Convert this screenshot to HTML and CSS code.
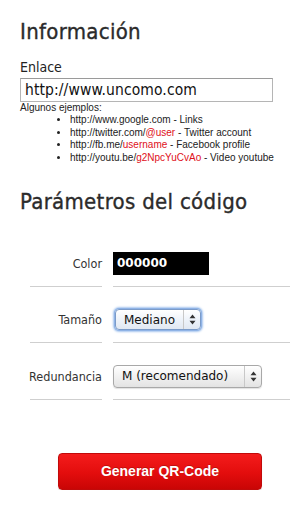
FILE: index.html
```html
<!DOCTYPE html>
<html lang="es">
<head>
<meta charset="utf-8">
<title>Generador QR</title>
<link rel="stylesheet" href="styles.css">
</head>
<body>
<div class="page">
  <h2 class="title title-info">Información</h2>
  <label class="field-label" for="url">Enlace</label>
  <div class="text-input" id="url">http://www.uncomo.com</div>
  <p class="examples-title">Algunos ejemplos:</p>
  <ul class="examples">
    <li>http://www.google.com - Links</li>
    <li>http://twitter.com/<span class="hl">@user</span> - Twitter account</li>
    <li>http://fb.me/<span class="hl">username</span> - Facebook profile</li>
    <li>http://youtu.be/<span class="hl">g2NpcYuCvAo</span> - Video youtube</li>
  </ul>

  <h2 class="title title-params">Parámetros del código</h2>
  <div class="params">
    <div class="cell label">Color</div>
    <div class="cell value"><span class="color-box">000000</span></div>

    <div class="cell label">Tamaño</div>
    <div class="cell value">
      <span class="select select-focus select-size">
        <span class="select-text">Mediano</span>
        <span class="select-arrows"><svg width="7" height="11" viewBox="0 0 7 11"><path d="M3.5 0.5 L6.5 4.2 H0.5 Z M3.5 10.5 L6.5 6.8 H0.5 Z" fill="#333"/></svg></span>
      </span>
    </div>

    <div class="cell label">Redundancia</div>
    <div class="cell value">
      <span class="select select-red">
        <span class="select-text">M (recomendado)</span>
        <span class="select-arrows"><svg width="7" height="11" viewBox="0 0 7 11"><path d="M3.5 0.5 L6.5 4.2 H0.5 Z M3.5 10.5 L6.5 6.8 H0.5 Z" fill="#333"/></svg></span>
      </span>
    </div>
  </div>

  <div class="actions">
    <button class="btn-generate" type="button">Generar QR-Code</button>
  </div>
</div>
</body>
</html>
```

FILE: styles.css
```css
html, body {
  margin: 0;
  padding: 0;
  background: #fff;
}
body {
  font-family: "DejaVu Sans Condensed", "DejaVu Sans", sans-serif;
  color: #222;
}
.page {
  width: 300px;
  padding: 0 20px;
  box-sizing: border-box;
}
.title {
  margin: 0;
  font-size: 22px;
  line-height: 26px;
  font-weight: normal;
  color: #2b2b2b;
  letter-spacing: 0.3px;
  -webkit-text-stroke: 0.35px #2b2b2b;
}
.title-info {
  padding-top: 19px;
}
.field-label {
  display: block;
  margin-top: 14px;
  font-size: 14px;
  line-height: 16px;
  color: #222;
}
.text-input {
  margin-top: 3px;
  width: 253px;
  height: 24px;
  box-sizing: border-box;
  border: 1px solid #b5b5b5;
  border-top-color: #9a9a9a;
  padding: 0 4px;
  font-size: 15.5px;
  line-height: 22px;
  color: #111;
  letter-spacing: 0.1px;
}
.examples-title {
  margin: 0;
  font-family: "Liberation Sans", Arial, sans-serif;
  font-size: 10px;
  line-height: 12px;
  color: #222;
}
.examples {
  margin: 0;
  padding-left: 50px;
  font-family: "Liberation Sans", Arial, sans-serif;
  font-size: 10px;
  line-height: 12.7px;
  color: #222;
}
.hl {
  color: #e0101a;
}
.title-params {
  margin-top: 24px;
}
.params {
  margin-top: 26px;
  margin-left: 10px;
  display: grid;
  grid-template-columns: 72px 177px;
  column-gap: 11px;
  row-gap: 10.5px;
}
.cell {
  height: 46px;
  box-sizing: border-box;
  border-bottom: 1px solid #cfcfcf;
  display: flex;
  align-items: center;
}
.label {
  justify-content: flex-end;
  font-size: 12.5px;
  color: #333;
}
.color-box {
  display: block;
  width: 96px;
  height: 23px;
  box-sizing: border-box;
  background: #000;
  color: #fff;
  font-family: "DejaVu Sans", sans-serif;
  font-weight: bold;
  font-size: 12px;
  line-height: 23px;
  padding-left: 4px;
}
.select {
  display: flex;
  align-items: stretch;
  box-sizing: border-box;
  border: 1px solid #a8a8a8;
  border-radius: 4px;
  background: linear-gradient(#ffffff, #f1f1f1 50%, #e3e3e3);
  box-shadow: 0 1px 1px rgba(0,0,0,0.12);
  font-family: "DejaVu Sans", sans-serif;
  font-size: 12px;
  color: #111;
}
.select-text {
  flex: 1;
  display: flex;
  align-items: center;
  padding-left: 8px;
  border-right: 1px solid #c8c8c8;
}
.select-arrows {
  width: 16px;
  display: flex;
  align-items: center;
  justify-content: center;
}
.select-size {
  width: 86px;
  height: 21px;
  margin-left: 2px;
  border-color: #7b9bc9;
  box-shadow: 0 0 0 1px #8fb3e6, 0 0 2px 2px #a9c7ef;
  background: linear-gradient(#ffffff, #eef3fa 50%, #e1e8f2);
}
.select-red {
  width: 149px;
  height: 23px;
}
.actions {
  margin-top: 53px;
  padding-left: 38px;
}
.btn-generate {
  display: block;
  width: 204px;
  height: 37px;
  border: 1px solid #c10a0a;
  border-radius: 4px;
  background: linear-gradient(#f41c1c, #e30d0d 55%, #c90505);
  box-shadow: 0 1px 1px rgba(0,0,0,0.15);
  color: #fff;
  font-family: "Liberation Sans", Arial, sans-serif;
  font-weight: bold;
  font-size: 14px;
  padding: 0;
  text-shadow: 0 -1px 0 rgba(0,0,0,0.2);
}
```
